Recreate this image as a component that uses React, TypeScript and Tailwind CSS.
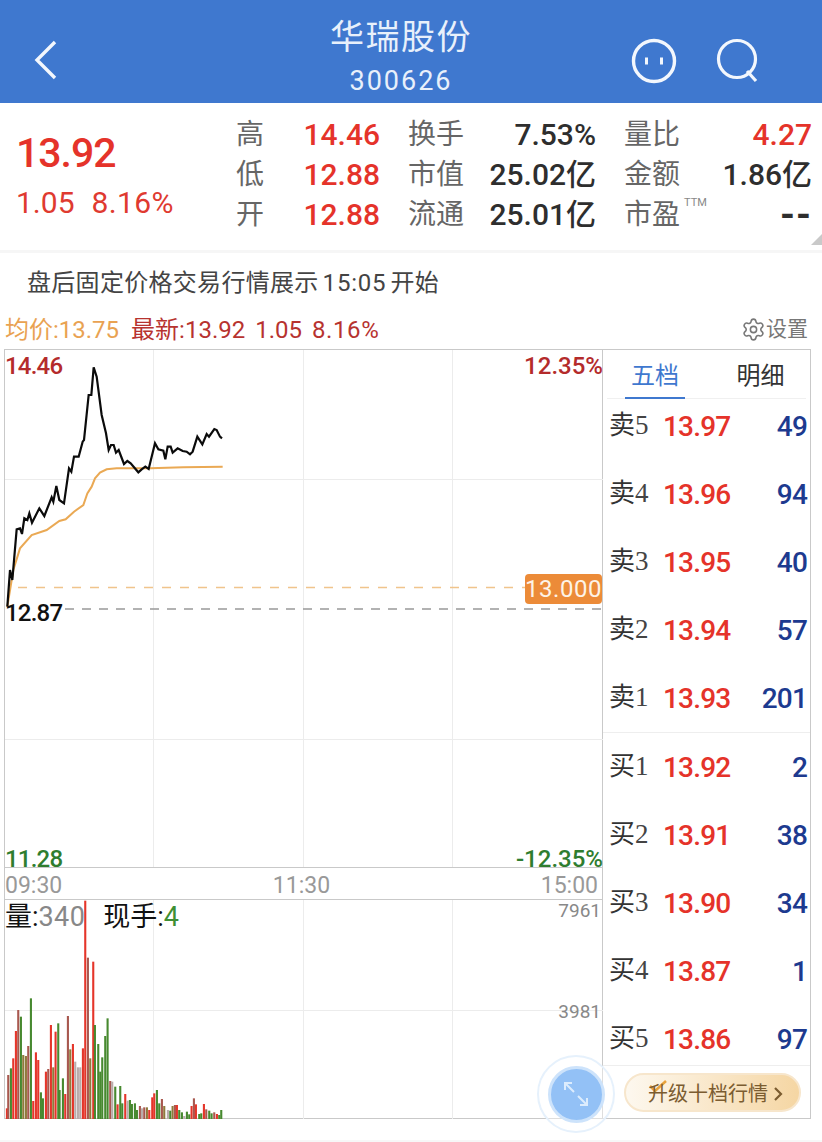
import React from 'react';
import { Settings } from 'lucide-react';

const font = { fontFamily: 'Roboto, "Noto Sans CJK SC", sans-serif' };

const RED = 'text-[#e5332a]';

// stat rows in the quote block
const stats = [
  ['高', '14.46', '换手', '7.53%', '量比', '4.27'],
  ['低', '12.88', '市值', '25.02亿', '金额', '1.86亿'],
  ['开', '12.88', '流通', '25.01亿', '市盈', '--'],
];

const sells = [
  ['卖', '5', '13.97', '49'],
  ['卖', '4', '13.96', '94'],
  ['卖', '3', '13.95', '40'],
  ['卖', '2', '13.94', '57'],
  ['卖', '1', '13.93', '201'],
];

const buys = [
  ['买', '1', '13.92', '2'],
  ['买', '2', '13.91', '38'],
  ['买', '3', '13.90', '34'],
  ['买', '4', '13.87', '1'],
  ['买', '5', '13.86', '97'],
];

// price traces, measured off the picture at 3x
const pricePts = [
  [22, 1040], [30, 930], [37, 960], [50, 808], [60, 805], [66, 822], [73, 775], [82, 780], [88, 760], [96, 788],
  [118, 745], [133, 768], [155, 712], [160, 725], [169, 678], [178, 720], [192, 730], [207, 625], [214, 635],
  [222, 590], [236, 590], [248, 545], [252, 540], [266, 405], [274, 405], [281, 322], [290, 350], [305, 465],
  [318, 520], [326, 570], [333, 555], [341, 555], [348, 578], [356, 570], [372, 612], [382, 603], [392, 610],
  [415, 637], [425, 628], [436, 620], [446, 627], [465, 550], [475, 568], [490, 572], [496, 598], [503, 560],
  [512, 560], [518, 578], [533, 565], [548, 573], [560, 575], [570, 583], [578, 575], [592, 530], [607, 553],
  [620, 522], [627, 530], [643, 507], [650, 510], [660, 530], [666, 535],
];

const avgPts = [
  [22, 1040], [40, 930], [60, 865], [95, 825], [140, 810], [178, 783], [197, 778], [222, 755], [250, 735],
  [262, 700], [275, 680], [285, 655], [300, 638], [320, 628], [350, 625], [450, 625], [550, 622], [668, 620],
];

// volume bars: x, top, colour code
const R = '#e5352a';
const G = '#47892f';
const B = '#a8584f';
const O = '#8f7a3c';
const Y = '#b9acab';
const bars: [number, number, string][] = [
  [20, 745, R], [24, 645, B], [32, 625, G], [39, 595, R], [47, 513, R], [54, 450, B], [62, 470, G], [69, 585, O],
  [77, 588, O], [84, 558, B], [92, 415, G], [99, 723, R], [107, 577, R], [114, 600, R], [122, 697, G], [128, 715, G],
  [137, 635, R], [144, 627, B], [152, 495, R], [159, 622, O], [166, 515, R], [174, 490, G], [178, 690, G], [188, 655, G],
  [195, 702, R], [203, 468, B], [210, 568, O], [218, 552, R], [225, 605, Y], [233, 622, Y], [240, 622, Y], [248, 565, R],
  [255, 122, R], [263, 293, B], [270, 595, O], [279, 305, R], [284, 495, G], [294, 552, G], [300, 635, G], [306, 592, G],
  [315, 528, G], [322, 475, G], [330, 663, B], [336, 665, Y], [345, 680, G], [352, 733, R], [360, 678, G], [366, 730, G],
  [375, 702, R], [382, 722, Y], [389, 720, G], [395, 732, G], [404, 730, G], [410, 750, G], [419, 738, B], [425, 745, Y],
  [432, 742, B], [440, 742, O], [447, 750, R], [456, 712, R], [462, 700, R], [470, 690, G], [477, 730, G], [485, 717, B],
  [492, 738, O], [503, 750, Y], [510, 752, G], [517, 738, O], [524, 735, B], [530, 735, R], [537, 750, G], [545, 757, G],
  [552, 768, Y], [560, 755, G], [567, 763, G], [574, 738, R], [581, 715, B], [587, 733, R], [597, 762, G], [603, 760, G],
  [611, 732, R], [618, 748, B], [627, 752, G], [634, 760, G], [642, 757, B], [650, 762, R], [657, 765, G], [663, 750, G],
];

const toLine = (pts: number[][]) => pts.map(([x, y]) => `${x / 3 - 5},${y / 3 + 260 - 350}`).join(' ');

const OrderRows = ({ rows }: { rows: string[][] }) => (
  <div className="flex flex-col gap-[32px]">
    {rows.map(([side, level, price, qty]) => (
      <div key={side + level} className="flex h-[36px] items-center pl-[6px] pr-[3px]">
        <span className="w-[54px] text-[26px] leading-none text-[#333] -translate-y-[2px]">
          {side}
          <span className="font-['Liberation_Serif'] text-[27px] text-[#444]">{level}</span>
        </span>
        <span className={`text-[28px] font-medium leading-none tracking-[-0.8px] ${RED}`}>{price}</span>
        <span className="ml-auto text-[28px] font-medium leading-none tracking-[-0.8px] text-[#1d3a8f]">{qty}</span>
      </div>
    ))}
  </div>
);

export default function App() {
  return (
    <div className="relative w-[822px] h-[1142px] bg-white overflow-hidden flex flex-col" style={font}>
      {/* top bar */}
      <header className="h-[103px] shrink-0 bg-[#3f78cf] flex items-center justify-between text-white relative">
        <svg width="30" height="44" viewBox="0 0 30 44" fill="none" className="ml-[31px] mt-[16px]">
          <path d="M24 4 L6 22 L24 40" stroke="#f3f7fd" strokeWidth="3.4" />
        </svg>
        <div className="absolute left-0 right-[20px] top-[15px] flex flex-col items-center">
          <div className="text-[34px] leading-[44px] tracking-[1.5px] text-[#e8f0fb]">华瑞股份</div>
          <div className="text-[27px] leading-[30px] tracking-[2px] text-[#e8f0fb] mt-[7px]">300626</div>
        </div>
        <div className="flex items-center gap-[39px] mr-[60px] mt-[18px]">
          <svg width="46" height="46" viewBox="0 0 46 46" fill="none" stroke="#f3f7fd">
            <circle cx="23" cy="23" r="20.5" strokeWidth="3.4" />
            <path d="M15.5 19.5 V26.5 M30.5 19.5 V26.5" strokeWidth="3" />
          </svg>
          <svg width="46" height="46" viewBox="0 0 46 46" fill="none" stroke="#f3f7fd">
            <circle cx="21" cy="21" r="18.5" strokeWidth="3.2" />
            <path d="M31 33 L40 43" strokeWidth="3.2" />
          </svg>
        </div>
      </header>

      {/* quote */}
      <section className="h-[147px] shrink-0 flex relative">
        <div className={`w-[236px] pl-[16px] pt-[27px] ${RED}`}>
          <div className="text-[41px] font-medium leading-[46px] tracking-[-1px]">13.92</div>
          <div className="text-[30px] leading-[36px] mt-[9px] flex gap-[17px] text-[#df3a30]">
            <span>1.05</span>
            <span className="tracking-[0.4px]">8.16%</span>
          </div>
        </div>
        <div className="pt-[12px] w-[576px] flex flex-col">
          {stats.map(([a, b, c, d, e, f]) => (
            <div key={a} className="h-[40px] flex items-center text-[28px] leading-none">
              <span className="w-[45px] text-[#666]">{a}</span>
              <span className={`w-[99px] text-right text-[30px] font-medium ${RED}`}>{b}</span>
              <span className="ml-[28px] w-[56px] text-[#666]">{c}</span>
              <span className="w-[132px] text-right text-[30px] font-medium text-[#2e2e2e]">{d}</span>
              <span className="ml-[28px] text-[#666] relative w-[56px]">
                {e}
                {e === '市盈' && <span className="absolute left-[60px] -top-[4px] text-[11px] text-[#888]">TTM</span>}
              </span>
              {f === '--' ? (
                <span className="ml-auto text-[38px] font-bold leading-none tracking-[1px] text-[#2e2e2e]">{f}</span>
              ) : (
                <span className={`w-[132px] text-right text-[30px] font-medium ${e === '量比' ? RED : 'text-[#2e2e2e]'}`}>{f}</span>
              )}
            </div>
          ))}
        </div>
        <svg width="11" height="11" viewBox="0 0 11 11" className="absolute right-0 bottom-[5px]">
          <path d="M11 0 V11 H0 Z" fill="#c9c9c9" />
        </svg>
      </section>

      <div className="h-[3px] shrink-0 bg-[#f6f6f6]" />

      {/* notice */}
      <div className="h-[60px] shrink-0 flex items-center gap-[4px] pl-[27px] text-[24px] text-[#444] tracking-[0.3px]">
        <span>盘后固定价格交易行情展示</span>
        <span className="tracking-[0.8px]">15:05</span>
        <span>开始</span>
      </div>

      {/* legend */}
      <div className="h-[36px] shrink-0 flex items-center pb-[3px] pl-[5px] pr-[14px] text-[24px] leading-none">
        <span className="text-[#e9a252]">均价:13.75</span>
        <span className="ml-[12px] text-[#b7332f] flex gap-[10px]">
          <span>最新:13.92</span>
          <span>1.05</span>
          <span className="tracking-[0.6px]">8.16%</span>
        </span>
        <span className="ml-auto flex items-center text-[21px] text-[#777]">
          <Settings size={25} strokeWidth={1.5} />
          设置
        </span>
      </div>

      {/* chart + order book */}
      <div className="h-[770px] shrink-0 ml-[4px] w-[807px] flex border-t border-[#c9c9c9]">
        <div className="w-[599px] shrink-0 border-l border-r border-b border-[#c9c9c9] flex flex-col">
          {/* price chart */}
          <div className="relative h-[517px] shrink-0">
            <svg width="598" height="517" viewBox="0 0 598 517" className="block" fill="none">
              <path d="M0 129.5 H598 M0 389.5 H598 M148.5 0 V517 M298.5 0 V517 M447.5 0 V517" stroke="#ececec" />
              <path d="M13 237.5 H520" stroke="#f0c48c" strokeWidth="1.5" strokeDasharray="9 9" />
              <path d="M60 259 H598" stroke="#999" strokeWidth="1.5" strokeDasharray="9 8" />
              <polyline points={toLine(avgPts)} stroke="#eaa954" strokeWidth="2" />
              <polyline points={toLine(pricePts)} stroke="#0b0b0b" strokeWidth="2.2" />
            </svg>
            <span className="absolute left-[0px] top-[3px] text-[24px] font-medium leading-[26px] tracking-[-0.8px] text-[#b42b2b]">14.46</span>
            <span className="absolute right-[-1px] top-[3px] text-[24px] font-medium leading-[26px] text-[#b42b2b]">12.35%</span>
            <span className="absolute left-[0px] top-[250px] text-[24px] font-medium leading-[26px] tracking-[-0.8px] text-[#111]">12.87</span>
            <span className="absolute left-[0px] bottom-[-5px] text-[24px] font-medium leading-[26px] tracking-[-0.8px] text-[#2f7d2f]">11.28</span>
            <span className="absolute right-[-1px] bottom-[-5px] text-[24px] font-medium leading-[26px] text-[#2f7d2f]">-12.35%</span>
            <span className="absolute left-[520px] top-[224px] h-[30px] w-[77px] rounded-[4px] bg-[#ec8b38] text-center text-[24px] leading-[30px] tracking-[0.5px] text-[#fdf3e7]">
              13.000
            </span>
          </div>

          {/* time axis */}
          <div className="h-[32px] shrink-0 border-t border-[#c9c9c9] flex items-center justify-between pt-[5px] pr-[4px] text-[23px] text-[#999]">
            <span>09:30</span>
            <span>11:30</span>
            <span>15:00</span>
          </div>

          {/* volume chart */}
          <div className="relative flex-1 border-t border-[#c9c9c9]">
            <svg width="598" height="219" viewBox="0 0 598 219" className="block" fill="none">
              <path d="M0 110.5 H598 M148.5 0 V219 M298.5 0 V219 M447.5 0 V219" stroke="#ececec" />
              {bars.map(([x, top, color]) => (
                <rect key={x} x={x / 3 - 5.8} y={top / 3 + 860 - 900} width="2.1" height={(777 - top) / 3} fill={color} />
              ))}
            </svg>
            <div className="absolute left-0 top-[2px] flex items-center text-[27px] leading-[30px] text-[#111]">
              <span>量:</span>
              <span className="text-[#888] tracking-[0.4px]">340</span>
              <span className="ml-[18px]">现手:</span>
              <span className="text-[#3f8f34]">4</span>
            </div>
            <span className="absolute right-[1px] top-[0px] text-[19px] leading-[22px] text-[#888]">7961</span>
            <span className="absolute right-[1px] top-[101px] text-[19px] leading-[22px] text-[#888]">3981</span>
          </div>
        </div>

        {/* order book */}
        <aside className="flex-1 border-r border-b border-[#c9c9c9] flex flex-col">
          <div className="h-[49px] shrink-0 flex pt-[3px] text-[24px] leading-none border-b border-[#f0f0f0] mx-[4px]">
            <div className="relative w-[96px] flex items-center justify-center text-[#3f78cf]">
              五档
              <span className="absolute left-[18px] bottom-[-1px] h-[2px] w-[60px] bg-[#3f78cf]" />
            </div>
            <div className="flex-1 flex items-center justify-center text-[#333] pl-[12px]">明细</div>
          </div>
          <div className="h-[334px] shrink-0 pt-[10px] border-b border-[#eeeeee]">
            <OrderRows rows={sells} />
          </div>
          <div className="h-[333px] shrink-0 pt-[17px] border-b border-[#eeeeee]">
            <OrderRows rows={buys} />
          </div>
          <div className="flex-1 flex items-center pl-[21px]">
            <div className="relative h-[39px] w-[177px] rounded-full border-2 border-[#f7e6cc] bg-gradient-to-r from-[#fdf8ef] to-[#f5d6a3] flex items-center justify-center pl-[6px] pt-[3px] text-[20px] leading-none text-[#7b5c30]">
              <svg width="20" height="14" viewBox="0 0 20 14" fill="none" className="absolute left-[22px] top-[5px]">
                <path d="M2 6 L7 11 L18 1" stroke="#e9a23c" strokeWidth="2.6" />
              </svg>
              <span className="relative">升级十档行情</span>
              <svg width="10" height="16" viewBox="0 0 10 16" fill="none" className="ml-[5px]">
                <path d="M2 2 L8 8 L2 14" stroke="#7b5c30" strokeWidth="2.2" />
              </svg>
            </div>
          </div>
        </aside>
      </div>

      {/* floating expand button */}
      <div className="absolute left-[537px] top-[1055px] h-[78px] w-[78px] rounded-full border-2 border-[#e6f1fc] bg-white/40 flex items-center justify-center">
        <div className="h-[57px] w-[57px] rounded-full bg-[#93c1f6] border-[3px] border-[#cde3fb] flex items-center justify-center">
          <svg width="30" height="30" viewBox="0 0 30 30" fill="none" stroke="#dcecfd" strokeWidth="2">
            <path d="M4 11 V4 H11 M4 4 L13 13 M26 19 V26 H19 M26 26 L17 17" />
          </svg>
        </div>
      </div>

      <div className="mt-auto h-[2px] bg-[#f7f7f7]" />
    </div>
  );
}
